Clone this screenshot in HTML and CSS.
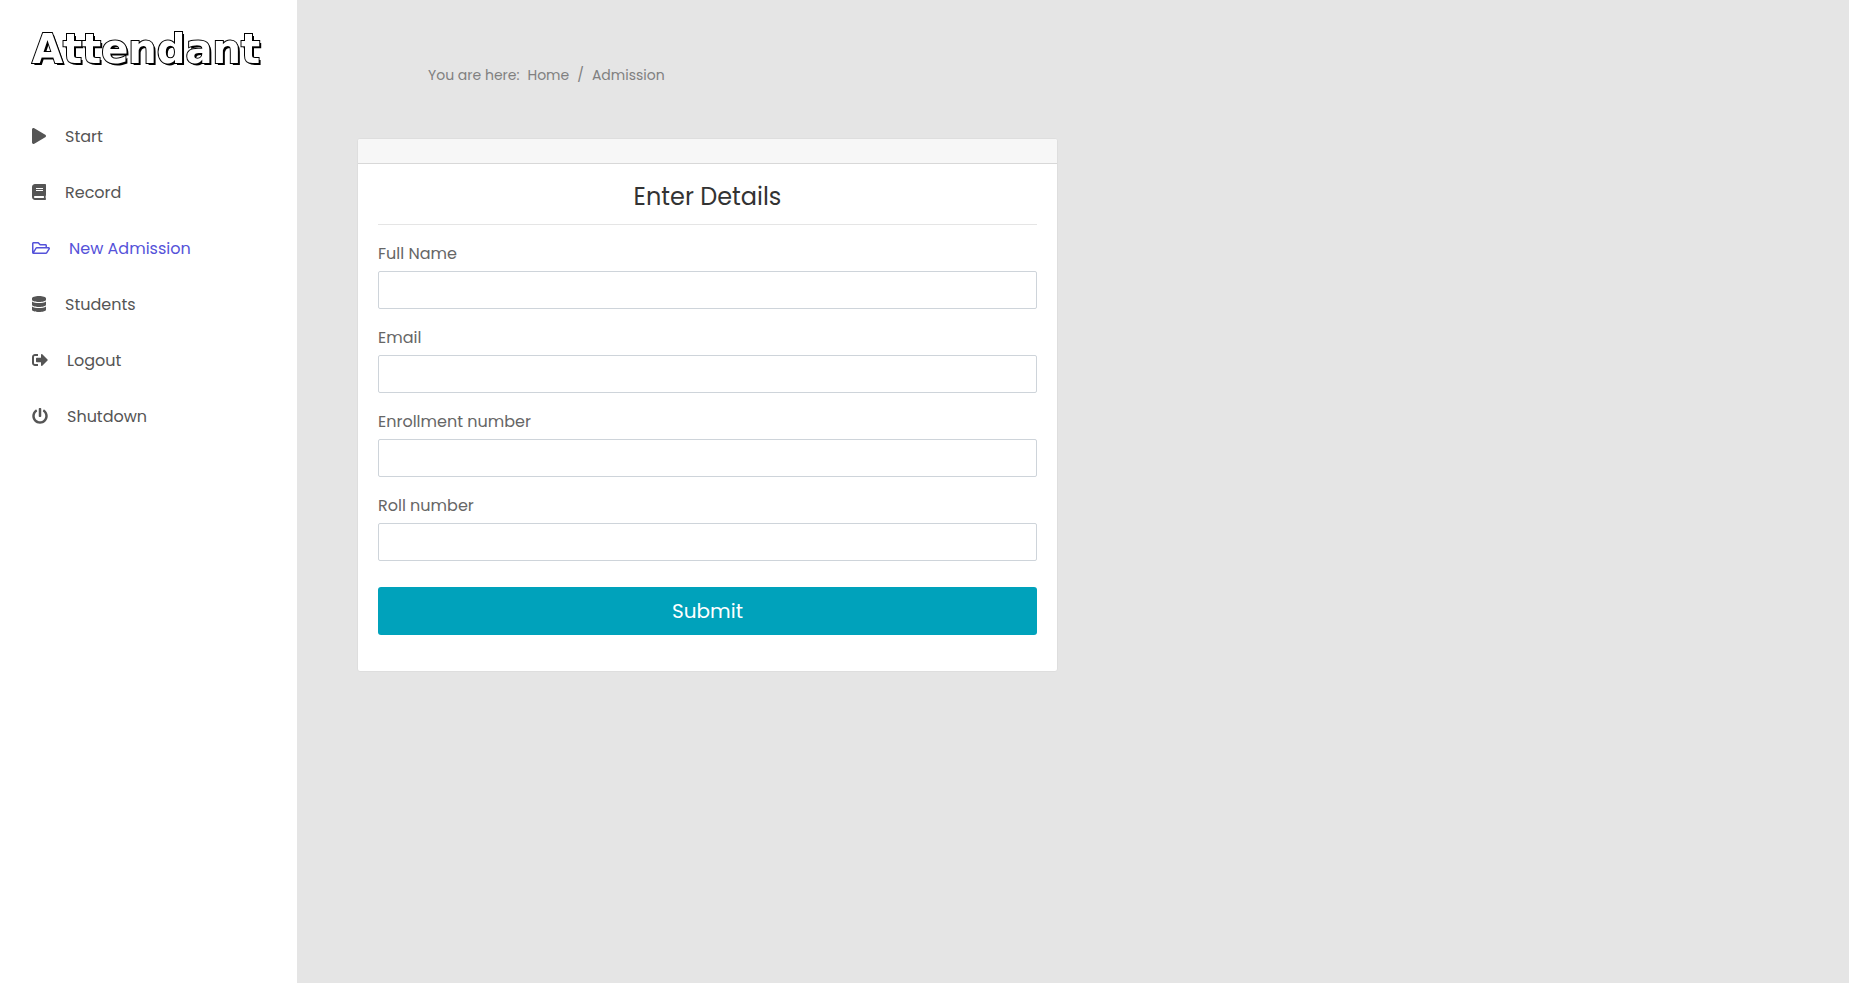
FILE: index.html
```html
<!DOCTYPE html>
<html lang="en">
<head>
<meta charset="utf-8">
<title>Attendant</title>
<link rel="stylesheet" href="styles.css">
</head>
<body>
<div class="page">
  <aside class="sidebar">
    <a class="logo" href="#">Attendant</a>
    <nav class="menu">
      <a class="menu-item" href="#"><svg class="icon" width="14" height="16" viewBox="0 0 448 512"><path d="M424.400 214.700L72.400 6.600C43.800-10.300 0 6.100 0 47.900V464c0 37.500 40.700 60.100 72.400 41.300l352-208c31.400-18.500 31.500-64.100 0-82.600z"/></svg><span>Start</span></a>
      <a class="menu-item" href="#"><svg class="icon" width="14" height="16" viewBox="0 0 448 512"><path d="M448 360V24c0-13.300-10.700-24-24-24H96C43 0 0 43 0 96v320c0 53 43 96 96 96h328c13.300 0 24-10.700 24-24v-16c0-7.500-3.500-14.300-8.900-18.700-4.200-15.400-4.200-59.300 0-74.700 5.400-4.300 8.900-11.100 8.900-18.600zM128 134c0-3.300 2.700-6 6-6h212c3.300 0 6 2.700 6 6v20c0 3.300-2.700 6-6 6H134c-3.300 0-6-2.700-6-6v-20zm0 64c0-3.300 2.700-6 6-6h212c3.300 0 6 2.700 6 6v20c0 3.300-2.700 6-6 6H134c-3.300 0-6-2.700-6-6v-20zm253.400 250H96c-17.700 0-32-14.300-32-32 0-17.600 14.400-32 32-32h285.400c-1.900 17.100-1.900 46.900 0 64z"/></svg><span>Record</span></a>
      <a class="menu-item active" href="#"><svg class="icon" width="18" height="16" viewBox="0 0 576 512"><path d="M527.900 224H480v-48c0-26.500-21.500-48-48-48H272l-64-64H48C21.500 64 0 85.500 0 112v288c0 26.500 21.500 48 48 48h400c16.500 0 31.900-8.500 40.700-22.600l79.900-128c20-31.900-3-73.400-40.700-73.400zM48 118c0-3.300 2.700-6 6-6h134.100l64 64H426c3.300 0 6 2.700 6 6v42H152c-16.800 0-32.400 8.800-41.100 23.200L48 351.400zm400 282H72l77.200-128H528z"/></svg><span>New Admission</span></a>
      <a class="menu-item" href="#"><svg class="icon" width="14" height="16" viewBox="0 0 448 512"><path d="M448 73.143v45.714C448 159.143 347.667 192 224 192S0 159.143 0 118.857V73.143C0 32.857 100.333 0 224 0s224 32.857 224 73.143zM448 176v102.857C448 319.143 347.667 352 224 352S0 319.143 0 278.857V176c48.125 33.143 136.208 48.572 224 48.572S399.874 209.143 448 176zm0 160v102.857C448 479.143 347.667 512 224 512S0 479.143 0 438.857V336c48.125 33.143 136.208 48.572 224 48.572S399.874 369.143 448 336z"/></svg><span>Students</span></a>
      <a class="menu-item" href="#"><svg class="icon" width="16" height="16" viewBox="0 0 512 512"><path d="M497 273L329 441c-15 15-41 4.500-41-17v-96H152c-13.300 0-24-10.700-24-24v-96c0-13.300 10.700-24 24-24h136V88c0-21.400 25.900-32 41-17l168 168c9.300 9.400 9.300 24.600 0 34zM192 436v-40c0-6.600-5.400-12-12-12H96c-17.700 0-32-14.300-32-32V160c0-17.700 14.300-32 32-32h84c6.600 0 12-5.400 12-12V76c0-6.600-5.400-12-12-12H96c-53 0-96 43-96 96v192c0 53 43 96 96 96h84c6.600 0 12-5.400 12-12z"/></svg><span>Logout</span></a>
      <a class="menu-item" href="#"><svg class="icon" width="16" height="16" viewBox="0 0 512 512"><path d="M400 54.100c63 45 104 118.600 104 201.900 0 136.800-110.800 247.700-247.500 248C120 504.300 8.200 393 8 256.400 7.900 173.100 48.900 99.300 111.800 54.200c11.700-8.300 28-4.800 35 7.700L162.600 90c5.900 10.500 3.100 23.800-6.600 31-41.500 30.800-68 79.600-68 134.900-.1 92.300 74.500 168.100 168 168.100 91.600 0 168.600-74.200 168-169.100-.3-51.800-24.700-101.800-68.100-134-9.700-7.200-12.400-20.500-6.500-30.900l15.800-28.100c7-12.400 23.200-16.100 34.800-7.800zM296 264V24c0-13.300-10.700-24-24-24h-32c-13.300 0-24 10.700-24 24v240c0 13.300 10.700 24 24 24h32c13.300 0 24-10.700 24-24z"/></svg><span>Shutdown</span></a>
    </nav>
  </aside>
  <main class="content">
    <nav class="breadcrumb" aria-label="Breadcrumb">
      <span>You are here:</span>
      <a href="#">Home</a>
      <span>/</span>
      <span>Admission</span>
    </nav>
    <div class="columns">
      <section class="card">
        <div class="card-header"></div>
        <div class="card-body">
          <h3 class="title">Enter Details</h3>
          <hr class="rule">
          <form class="form">
            <div class="field"><label for="name">Full Name</label><input id="name" type="text"></div>
            <div class="field"><label for="email">Email</label><input id="email" type="text"></div>
            <div class="field"><label for="enrollment">Enrollment number</label><input id="enrollment" type="text"></div>
            <div class="field"><label for="roll">Roll number</label><input id="roll" type="text"></div>
            <button class="submit" type="submit">Submit</button>
          </form>
        </div>
      </section>
    </div>
  </main>
</div>
</body>
</html>
```
FILE: styles.css
```css
* { box-sizing: border-box; }

body {
  margin: 0;
  font-family: Poppins, Inter, sans-serif;
  font-size: 16px;
  line-height: 24px;
  color: #666;
  background: #e5e5e5;
}

a { color: inherit; text-decoration: none; }

.page { display: flex; min-height: 100vh; }

.sidebar {
  flex: none;
  width: 297px;
  padding: 25px 32px;
  background: #fff;
}

.logo {
  display: block;
  font-family: "DejaVu Sans", sans-serif;
  font-weight: 700;
  font-size: 40px;
  line-height: 48px;
  color: #fff;
  -webkit-text-stroke: 2px #000;
  paint-order: stroke fill;
  text-shadow: 2px 2px 0 #000;
  will-change: opacity;
}

.menu { display: flex; flex-direction: column; gap: 32px; padding-top: 52px; }

.menu-item { display: flex; align-items: center; gap: 19px; color: #555; }

.menu-item.active { color: #5552d9; }

.icon { flex: none; margin-bottom: 2px; fill: currentColor; }

.content { flex: 1; padding: 63px 32px 64px 60px; }

.breadcrumb {
  display: flex;
  gap: 8px;
  padding-left: 71px;
  font-size: 14px;
  color: #808080;
}

.columns {
  display: grid;
  grid-template-columns: 1fr 1fr;
  gap: 58px;
  padding-top: 51px;
}

.card {
  border: 1px solid #dedede;
  border-radius: 3px;
  background: #fff;
}

.card-header {
  height: 25px;
  border-bottom: 1px solid #d8d8d8;
  border-radius: 2px 2px 0 0;
  background: #f7f7f7;
}

.card-body { padding: 17px 20px 36px; }

.title {
  margin: 0;
  font-weight: 400;
  font-size: 24px;
  line-height: 32px;
  text-align: center;
  color: #333;
}

.rule { margin: 11px 0 17px; border: 0; border-top: 1px solid #e5e5e5; }

.form { display: flex; flex-direction: column; gap: 17px; }

.field { display: flex; flex-direction: column; gap: 5px; }

.field input {
  width: 100%;
  height: 38px;
  padding: 6px 12px;
  border: 1px solid #ced4da;
  border-radius: 2px;
  font: inherit;
  color: #495057;
  background: #fff;
}

.submit {
  height: 48px;
  margin-top: 9px;
  border: 0;
  border-radius: 3px;
  font: inherit;
  font-size: 20px;
  color: #fff;
  background: #00a2bb;
}
```
